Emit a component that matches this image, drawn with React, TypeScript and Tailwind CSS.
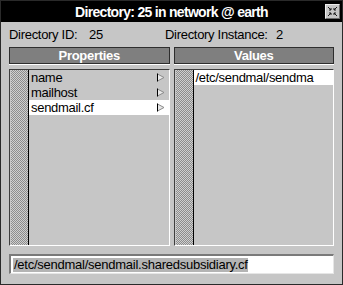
import React from "react";

const stripe =
  "w-[18px] shrink-0 border-r border-black bg-[repeating-conic-gradient(#8c8c8c_0%_25%,#cfcfcf_0%_50%)] bg-[length:2px_2px]";

function Arrow() {
  return (
    <svg width="9" height="9" viewBox="0 0 9 9" className="shrink-0">
      <path d="M1.5 1 L8 4.5 L1.5 8 Z" fill="#e8e8e8" stroke="#8a8a8a" strokeWidth="1" />
      <path d="M1.5 0.5 V8.5" stroke="#000" strokeWidth="1" />
    </svg>
  );
}

function CloseIcon() {
  return (
    <svg width="13" height="13" viewBox="0 0 13 13">
      <g stroke="#1a1a1a" strokeWidth="1" fill="none">
        <path d="M2 2 L5 5 M5 3 V5 H3" />
        <path d="M11 2 L8 5 M8 3 V5 H10" />
        <path d="M2 11 L5 8 M5 10 V8 H3" />
        <path d="M11 11 L8 8 M8 10 V8 H10" />
      </g>
    </svg>
  );
}

function Header({ label }: { label: string }) {
  return (
    <div className="border-b border-white">
      <div className="h-[17px] border border-[#2e2e2e] bg-[#7f7f7f] flex items-center justify-center text-white font-bold text-[13px] leading-none tracking-[-0.3px]">
        {label}
      </div>
    </div>
  );
}

export default function App() {
  const props = ["name", "mailhost", "sendmail.cf"];
  return (
    <div className="w-[343px] h-[285px] bg-[#c6c6c6] border border-[#2a2a2a] flex flex-col font-['Liberation_Sans',Arial,sans-serif] text-black overflow-hidden">
      <div className="h-[21px] bg-black grid grid-cols-[1fr_auto_1fr] items-center shrink-0">
        <div />
        <div className="text-white font-bold text-[14px] leading-none tracking-[-0.7px] pt-[1px]">
          Directory: 25 in network @ earth
        </div>
        <div className="flex justify-end pr-[2px]">
          <div className="w-[15px] h-[15px] bg-[#c6c6c6] border border-t-[#eeeeee] border-l-[#eeeeee] border-b-[#6a6a6a] border-r-[#6a6a6a] flex items-center justify-center">
            <CloseIcon />
          </div>
        </div>
      </div>
      <div className="flex-1 flex flex-col px-2 pt-[5px]">
        <div className="h-[20px] flex text-[13px] leading-[15px] tracking-[-0.3px]">
          <div className="w-[80px]">Directory ID:</div>
          <div className="w-[76px]">25</div>
          <div className="w-[111px]">Directory Instance:</div>
          <div>2</div>
        </div>
        <div className="grid grid-cols-2 gap-[4px]">
          <Header label="Properties" />
          <Header label="Values" />
        </div>
        <div className="grid grid-cols-2 gap-[4px] mt-[4px]">
          <div className="h-[177px] border-t border-l border-[#3e3e3e] border-b border-r border-b-white border-r-white pl-[1px] flex">
            <div className={stripe} />
            <div className="flex-1 flex flex-col text-[13px] tracking-[-0.3px]">
              {props.map((p, i) => (
                <div
                  key={p}
                  className={
                    "h-[15px] flex items-center justify-between pl-[2px] pr-[4px] " +
                    (i === 2 ? "bg-white" : "")
                  }
                >
                  <span className="leading-none">{p}</span>
                  <Arrow />
                </div>
              ))}
            </div>
          </div>
          <div className="h-[177px] border-t border-l border-[#3e3e3e] border-b border-r border-b-white border-r-white pl-[1px] flex">
            <div className={stripe} />
            <div className="flex-1 flex flex-col text-[13px] tracking-[-0.3px]">
              <div className="h-[15px] flex items-center pl-[2px] bg-white">
                <span className="leading-none">/etc/sendmal/sendma</span>
              </div>
            </div>
          </div>
        </div>
        <div className="mt-[8px] h-[20px] bg-white border-t-2 border-l-2 border-[#7a7a7a] border-b border-r border-b-[#e6e6e6] border-r-[#e6e6e6] flex items-center pl-[2px]">
          <span className="bg-[#b4b4b4] text-[13px] leading-[14px] tracking-[-0.25px] pl-[1px]">
            /etc/sendmal/sendmail.sharedsubsidiary.cf
          </span>
        </div>
      </div>
    </div>
  );
}
